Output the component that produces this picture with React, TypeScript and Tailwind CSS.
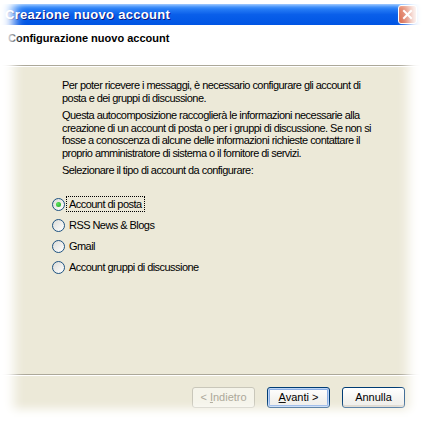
import { useState } from "react";

const options = [
  "Account di posta",
  "RSS News & Blogs",
  "Gmail",
  "Account gruppi di discussione",
];

function Radio({ checked }: { checked: boolean }) {
  return (
    <span className="relative flex h-[13px] w-[13px] shrink-0 items-center justify-center rounded-full border border-[#1c5180] bg-gradient-to-br from-[#dcdcd7] to-white">
      {checked && (
        <span className="h-[5px] w-[5px] rounded-full bg-[radial-gradient(circle_at_35%_35%,#5de45d,#21a121)]" />
      )}
    </span>
  );
}

function XpButton({
  children,
  disabled,
  primary,
}: {
  children: React.ReactNode;
  disabled?: boolean;
  primary?: boolean;
}) {
  if (disabled) {
    return (
      <button className="h-[21px] w-[63px] rounded-[3px] border border-[#c9c7ba] bg-[#f5f4ea] text-[11px] text-[#aca899]">
        {children}
      </button>
    );
  }
  return (
    <button
      className={
        primary
          ? "h-[21px] w-[63px] rounded-[3px] border border-[#003c74] bg-gradient-to-b from-white to-[#ecebe6] text-[11px] text-black shadow-[inset_0_0_0_1px_#bcd4f6,inset_0_0_0_2px_#89ade4]"
          : "h-[21px] w-[63px] rounded-[3px] border border-[#003c74] bg-gradient-to-b from-white to-[#ecebe6] text-[11px] text-black shadow-[inset_0_-2px_0_#d6d0c5]"
      }
    >
      {children}
    </button>
  );
}

export default function App() {
  const [selected, setSelected] = useState(0);

  return (
    <div
      className="relative h-[421px] w-[422px] overflow-hidden bg-white"
      style={{ fontFamily: '"Liberation Sans", Arial, sans-serif' }}
    >
      <div className="flex h-full flex-col pt-[4px]">
        {/* title bar */}
        <div className="flex h-[21px] items-center justify-between bg-gradient-to-b from-[#3d95ff] via-[#0a5fea] to-[#0054e3] pl-[5px] pr-[5px]">
          <span className="text-[13px] font-bold leading-none tracking-[0.3px] text-white [text-shadow:1px_1px_#0a1883]">
            Creazione nuovo account
          </span>
          <span className="flex h-[19px] w-[19px] items-center justify-center rounded-[3px] border border-white bg-gradient-to-br from-[#e8876a] to-[#c8452a]">
            <svg width="11" height="11" viewBox="0 0 11 11">
              <path d="M2 2 L9 9 M9 2 L2 9" stroke="white" strokeWidth="2" strokeLinecap="square" />
            </svg>
          </span>
        </div>

        {/* header */}
        <div className="h-[40px] bg-white pl-[8px] pt-[7px]">
          <p className="text-[11px] font-bold leading-[13px] text-black">Configurazione nuovo account</p>
        </div>
        <div className="h-[1px] bg-[#aca899]" />
        <div className="h-[1px] bg-white" />

        {/* body */}
        <div className="flex-1 whitespace-nowrap bg-[#ece9d8] pl-[62px] pt-[12px] text-[11px] leading-[12.5px] tracking-[-0.55px] text-black">
          <p>
            Per poter ricevere i messaggi, è necessario configurare gli account di
            <br />
            posta e dei gruppi di discussione.
          </p>
          <p className="mt-[5px]">
            Questa autocomposizione raccoglierà le informazioni necessarie alla
            <br />
            creazione di un account di posta o per i gruppi di discussione. Se non si
            <br />
            fosse a conoscenza di alcune delle informazioni richieste contattare il
            <br />
            proprio amministratore di sistema o il fornitore di servizi.
          </p>
          <p className="mt-[5px]">Selezionare il tipo di account da configurare:</p>

          <div className="-ml-[10px] mt-[17px] flex flex-col">
            {options.map((opt, i) => (
              <label
                key={opt}
                className="flex h-[21px] cursor-default items-center gap-[1px]"
                onClick={() => setSelected(i)}
              >
                <Radio checked={selected === i} />
                <span
                  className={
                    selected === i
                      ? "border border-dotted border-black px-[2px] leading-[14px]"
                      : "border border-transparent px-[2px] leading-[14px]"
                  }
                >
                  {opt}
                </span>
              </label>
            ))}
          </div>
        </div>

        {/* footer */}
        <div className="h-[1px] bg-[#aca899]" />
        <div className="h-[1px] bg-white" />
        <div className="flex h-[45px] justify-end gap-[12px] bg-[#ece9d8] pr-[17px] pt-[11px]">
          <XpButton disabled>
            &lt; <span className="underline">I</span>ndietro
          </XpButton>
          <XpButton primary>
            <span className="underline">A</span>vanti &gt;
          </XpButton>
          <XpButton>Annulla</XpButton>
        </div>
      </div>

      {/* soft white fade around the edges of the cropped screenshot */}
      <div className="pointer-events-none absolute inset-0 shadow-[inset_20px_0_12px_-6px_white,inset_-20px_0_12px_-6px_white,inset_0_6px_5px_-2px_white,inset_0_-16px_10px_-4px_white]" />
    </div>
  );
}
